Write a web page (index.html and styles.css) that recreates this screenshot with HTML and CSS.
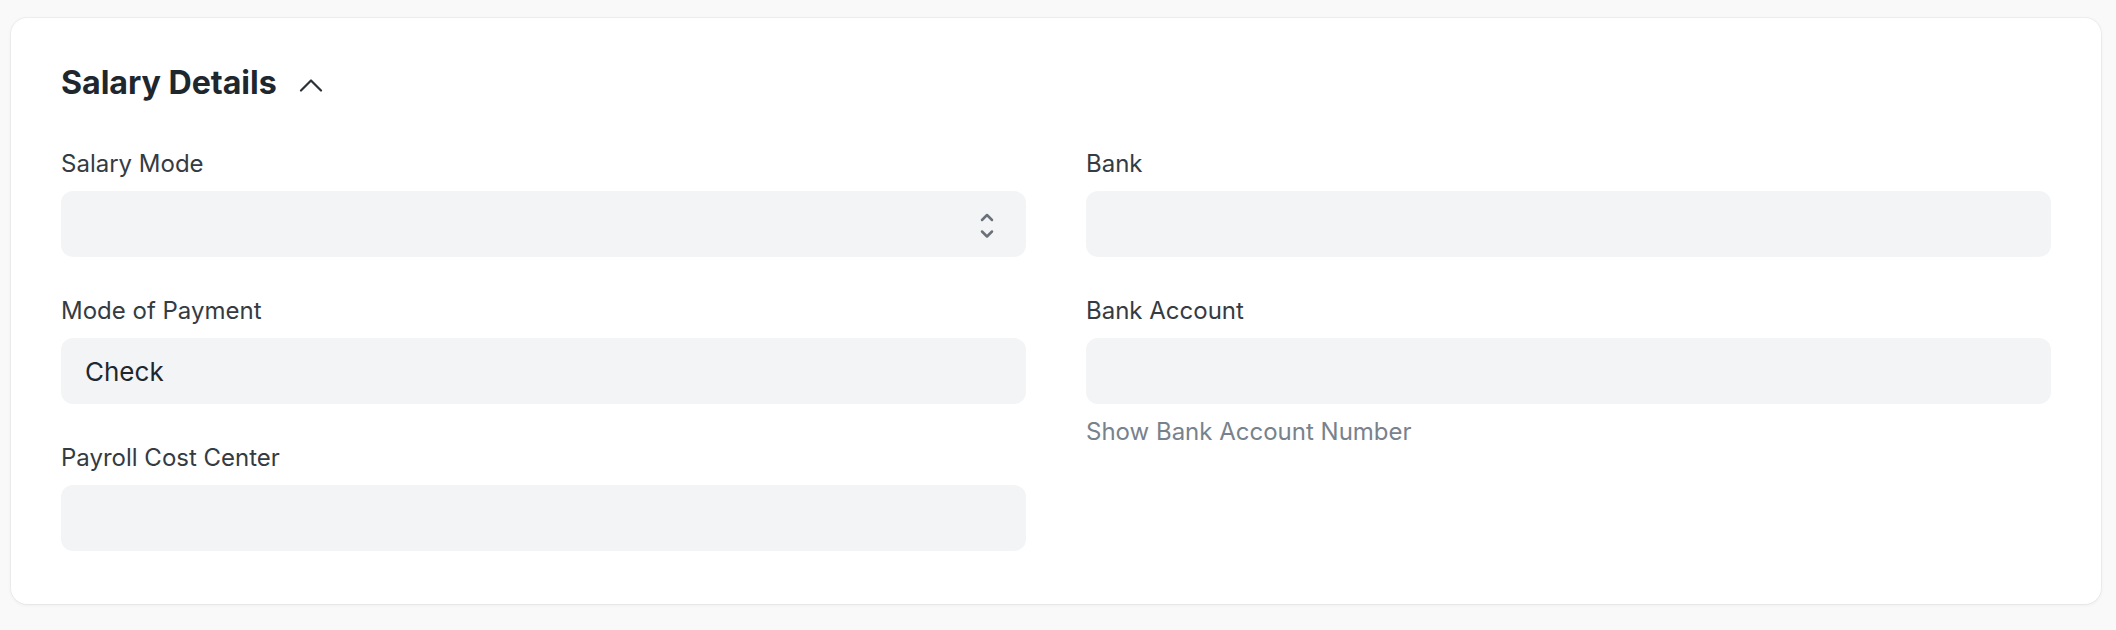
FILE: index.html
```html
<!DOCTYPE html>
<html lang="en">
<head>
<meta charset="utf-8">
<title>Salary Details</title>
<link rel="stylesheet" href="styles.css">
</head>
<body>
<section class="card">
  <div class="section-head">
    <h2 class="section-title">Salary Details</h2>
    <svg class="collapse-icon" width="24" height="14" viewBox="0 0 24 14" aria-hidden="true"><path d="M2 12.5 L12 2.5 L22 12.5" fill="none" stroke="currentColor" stroke-width="2.2" stroke-linecap="round" stroke-linejoin="round"/></svg>
  </div>
  <div class="form-grid">
    <div class="form-column">
      <div class="field">
        <label class="field-label">Salary Mode</label>
        <div class="control control-select">
          <span class="control-value"></span>
          <svg class="select-icon" width="14" height="28" viewBox="0 0 14 28" aria-hidden="true"><path d="M2 8 L7 3 L12 8" fill="none" stroke="currentColor" stroke-width="2.5" stroke-linecap="round" stroke-linejoin="round"/><path d="M2 19.5 L7 24.5 L12 19.5" fill="none" stroke="currentColor" stroke-width="2.5" stroke-linecap="round" stroke-linejoin="round"/></svg>
        </div>
      </div>
      <div class="field">
        <label class="field-label">Mode of Payment</label>
        <div class="control"><span class="control-value">Check</span></div>
      </div>
      <div class="field">
        <label class="field-label">Payroll Cost Center</label>
        <div class="control"><span class="control-value"></span></div>
      </div>
    </div>
    <div class="form-column">
      <div class="field">
        <label class="field-label">Bank</label>
        <div class="control"><span class="control-value"></span></div>
      </div>
      <div class="field">
        <label class="field-label">Bank Account</label>
        <div class="control"><span class="control-value"></span></div>
        <div class="field-help">Show Bank Account Number</div>
      </div>
    </div>
  </div>
</section>
</body>
</html>
```

FILE: styles.css
```css
* { box-sizing: border-box; }

html, body { margin: 0; }

body {
  background: #f8f9f8;
  font-family: Inter, "Noto Sans", "Liberation Sans", sans-serif;
  padding: 18px 15px 26px 11px;
}

.card {
  background: #ffffff;
  border-radius: 16px;
  box-shadow: 0 0 0 1px rgba(0, 0, 0, 0.035), 0 1px 4px rgba(0, 0, 0, 0.06);
  padding: 45px 50px 52px 50px;
  height: 586px;
}

.section-head {
  display: flex;
  align-items: center;
  gap: 22px;
  height: 40px;
}

.section-title {
  margin: 0;
  font-size: 32.2px;
  line-height: 40px;
  font-weight: 700;
  color: #1f272e;
  letter-spacing: -0.05px;
}

.collapse-icon {
  color: #2b3238;
  margin-top: 4px;
}

.form-grid {
  display: grid;
  grid-template-columns: 1fr 1fr;
  column-gap: 60px;
  margin-top: 46px;
}

.form-column {
  display: flex;
  flex-direction: column;
  gap: 39px;
}

.field {
  display: flex;
  flex-direction: column;
}

.field-label {
  font-size: 24px;
  line-height: 30px;
  color: #343b42;
  margin-bottom: 12px;
}

.control {
  height: 66px;
  background: #f3f4f6;
  border-radius: 12px;
  display: flex;
  align-items: center;
  justify-content: space-between;
  padding: 0 32px 0 24px;
}

.control-value {
  font-size: 26px;
  color: #1f272e;
}

.select-icon {
  color: #6a7178;
  margin-top: 4px;
}

.field-help {
  margin-top: 13px;
  font-size: 24px;
  line-height: 30px;
  color: #78828c;
}
```
